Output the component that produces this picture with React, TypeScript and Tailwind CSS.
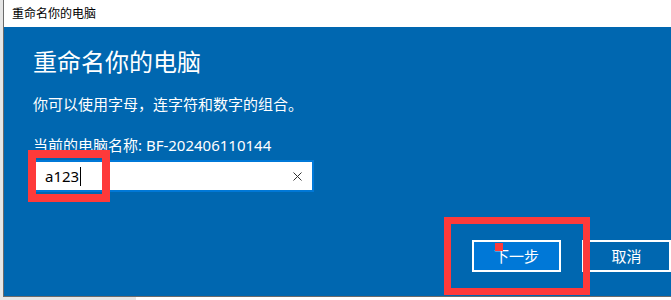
import React from "react";

const font = { fontFamily: '"Noto Sans", "Noto Sans CJK SC", sans-serif' };

export default function App() {
  return (
    <div className="relative w-[671px] h-[300px] overflow-hidden bg-white" style={font}>
      <div className="flex h-[297px]">
        {/* desktop strip on the left */}
        <div className="w-[6px] bg-[#e6e6e6]" />
        <div className="flex-1 flex flex-col border-l border-b border-[#6b6b6b]">
          {/* title bar */}
          <div className="h-[27px] bg-white flex items-center pl-[8px] text-[12px] text-black">
            重命名你的电脑
          </div>
          {/* dialog body */}
          <div className="flex-1 bg-[#0067b0] text-white pl-[29px]">
            <h1 className="mt-[19px] text-[24px] leading-[32px]">重命名你的电脑</h1>
            <p className="mt-[16px] text-[15px] leading-[20px]">你可以使用字母，连字符和数字的组合。</p>
            <p className="mt-[21px] text-[15px] leading-[20px]">当前的电脑名称: BF-202406110144</p>
            <div className="mt-[5px] w-[281px] h-[32px] border-2 border-[#0078d7] bg-white flex items-center pl-[10px] pr-[10px]">
              <span className="text-[15px] text-black leading-[20px]">a123</span>
              <span className="w-px h-[19px] bg-black ml-px" />
              <span className="ml-auto text-[#333]">
                <svg width="9" height="9" viewBox="0 0 9 9">
                  <path d="M0.5 0.5 L8.5 8.5 M8.5 0.5 L0.5 8.5" stroke="#333" strokeWidth="1" />
                </svg>
              </span>
            </div>
            <div className="mt-[48px] flex gap-[21px] pl-[439px]">
              <button className="w-[89px] h-[32px] shrink-0 border-2 border-white bg-[#0078d7] text-[15px] text-white">
                下一步
              </button>
              <button className="w-[89px] h-[32px] shrink-0 border-2 border-white bg-[#0067b0] text-[15px] text-white">
                取消
              </button>
            </div>
          </div>
        </div>
      </div>
      <div className="w-[136px] h-[3px] bg-[#e6e6e6]" />

      {/* red annotation marks */}
      <div className="absolute left-[28px] top-[150px] w-[82px] h-[52px] border-[8px] border-[#fe3a3a]" />
      <div className="absolute left-[444px] top-[217px] w-[146px] h-[78px] border-[7px] border-[#fe3a3a]" />
      <div className="absolute left-[495px] top-[243px] w-[8px] h-[8px] bg-[#fe3a3a]" />
    </div>
  );
}
